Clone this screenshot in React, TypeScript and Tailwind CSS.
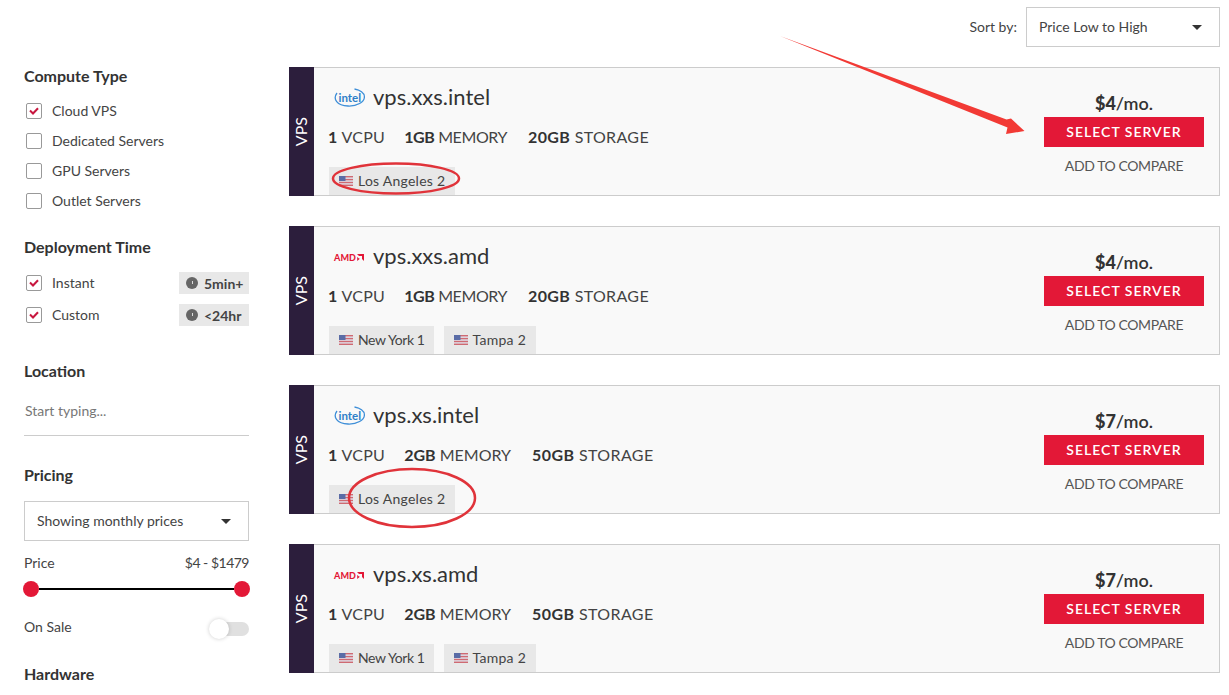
import type { ReactNode } from "react";

const SERVERS = [
  { name: "vps.xxs.intel", brand: "intel", price: "$4", cpu: "1", mem: "1GB", disk: "20GB", tags: ["Los Angeles 2"] },
  { name: "vps.xxs.amd", brand: "amd", price: "$4", cpu: "1", mem: "1GB", disk: "20GB", tags: ["New York 1", "Tampa 2"] },
  { name: "vps.xs.intel", brand: "intel", price: "$7", cpu: "1", mem: "2GB", disk: "50GB", tags: ["Los Angeles 2"] },
  { name: "vps.xs.amd", brand: "amd", price: "$7", cpu: "1", mem: "2GB", disk: "50GB", tags: ["New York 1", "Tampa 2"] },
];

// tag labels don't quite share the reference font's widths
const TAG_SPACING: Record<string, string> = {
  "Los Angeles 2": "tracking-[0.25px]",
  "New York 1": "tracking-[-0.4px] pr-[9px]",
  "Tampa 2": "tracking-[0.25px]",
};

function Caret() {
  return <span className="h-0 w-0 border-x-[5px] border-t-[5px] border-x-transparent border-t-[#333]" />;
}

function Flag() {
  return (
    <svg width="14" height="10" viewBox="0 0 14 10" className="shrink-0">
      <rect width="14" height="10" fill="#dfe0ea" />
      <rect y="0" width="14" height="1.4" fill="#cf6a72" />
      <rect y="2.9" width="14" height="1.4" fill="#cf6a72" />
      <rect y="5.8" width="14" height="1.4" fill="#cf6a72" />
      <rect y="8.6" width="14" height="1.4" fill="#cf6a72" />
      <rect width="6.5" height="5" fill="#5a6ca6" />
    </svg>
  );
}

function IntelLogo() {
  return (
    <svg width="31" height="20" viewBox="0 0 31 20">
      <path d="M3 5C-1.5 11 3 17.5 14 18C23 18.4 30.4 14 30.4 9C30.4 5 26 2 20.5 1" fill="none" stroke="#3f8fd8" strokeWidth="1.3" />
      <text x="4.5" y="13.5" fontSize="11.5" fontWeight="700" fill="#2f7fc8" fontFamily="Lato, sans-serif">intel</text>
    </svg>
  );
}

function AmdLogo() {
  return (
    <div className="flex w-[31px] items-center gap-px text-[9px] font-black leading-none tracking-[0.1px] text-[#e31837]">
      <span>AMD</span>
      <svg width="7" height="7" viewBox="0 0 7 7">
        <path d="M0 0H7V7L5 5V2H2ZM0 2.8L2 4.6H2.6V5L0.2 7V3Z" fill="#e31837" />
      </svg>
    </div>
  );
}

function Check({ label, checked }: { label: string; checked?: boolean }) {
  return (
    <div className="flex items-center gap-[10px]">
      <span className="flex h-4 w-4 items-center justify-center rounded-[2px] border border-[#999] bg-white">
        {checked && (
          <svg width="10" height="8" viewBox="0 0 10 8">
            <path d="M1 3.5L4 6.5L9 1.2" fill="none" stroke="#c8173f" strokeWidth="2" />
          </svg>
        )}
      </span>
      <span className="pb-px text-[14px] leading-[19px] text-[#444]">{label}</span>
    </div>
  );
}

function TimeBadge({ text }: { text: string }) {
  return (
    <span className="flex h-[22px] w-[70px] items-center gap-[6px] bg-[#e8e8e8] pl-[7px] text-[14px] font-bold text-[#444]">
      <span className="flex h-3 w-3 items-center justify-center rounded-full bg-[#666]">
        <span className="mb-[2px] h-[3px] w-px bg-[#ddd]" />
      </span>
      {text}
    </span>
  );
}

function Heading({ children }: { children: ReactNode }) {
  return <h3 className="text-[16px] font-bold leading-5 text-[#333]">{children}</h3>;
}

function Sidebar() {
  return (
    <aside className="flex w-[225px] shrink-0 flex-col pt-[66px]">
      <Heading>Compute Type</Heading>
      <div className="mt-[15px] flex flex-col gap-[10px] pl-[2px]">
        <Check label="Cloud VPS" checked />
        <Check label="Dedicated Servers" />
        <Check label="GPU Servers" />
        <Check label="Outlet Servers" />
      </div>

      <div className="mt-[26px]">
        <Heading>Deployment Time</Heading>
      </div>
      <div className="mt-[15px] flex flex-col gap-[10px] pl-[2px]">
        <div className="flex items-center justify-between">
          <Check label="Instant" checked />
          <TimeBadge text="5min+" />
        </div>
        <div className="flex items-center justify-between">
          <Check label="Custom" checked />
          <TimeBadge text="<24hr" />
        </div>
      </div>

      <div className="mt-[35px]">
        <Heading>Location</Heading>
      </div>
      <div className="mt-[10px] h-[45px] border-b border-[#ccc] pl-[1px] pt-[10px] text-[14px] leading-5 text-[#777]">Start typing...</div>

      <div className="mt-[29px]">
        <Heading>Pricing</Heading>
      </div>
      <div className="mt-[16px] flex h-10 items-center justify-between border border-[#ccc] pl-3 pr-[17px] text-[14px] text-[#444]">
        <span className="pb-[2px]">Showing monthly prices</span>
        <Caret />
      </div>
      <div className="mt-[12px] flex justify-between text-[14px] leading-5 text-[#444]">
        <span>Price</span>
        <span className="tracking-[-0.5px]">$4 - $1479</span>
      </div>
      <div className="mx-[-1px] mt-[8px] flex items-center">
        <span className="h-4 w-4 shrink-0 rounded-full bg-[#e31837]" />
        <span className="h-[2px] flex-1 bg-black" />
        <span className="h-4 w-4 shrink-0 rounded-full bg-[#e31837]" />
      </div>
      <div className="mt-[24px] flex items-center justify-between text-[14px] leading-5 text-[#444]">
        <span className="-mt-1">On Sale</span>
        <span className="relative h-[14px] w-[30px] rounded-full bg-[#e0e0e0]">
          <span className="absolute left-[-10px] top-[-3px] h-5 w-5 rounded-full bg-white shadow-[0_0_4px_rgba(0,0,0,0.2)]" />
        </span>
      </div>
      <div className="mt-[27px]">
        <Heading>Hardware</Heading>
      </div>
    </aside>
  );
}

function ServerCard({ s }: { s: (typeof SERVERS)[number] }) {
  return (
    <div className="flex h-[129px] border border-l-0 border-[#ccc] bg-[#f9f9f9]">
      <div className="-my-px flex w-[25px] shrink-0 items-center justify-center bg-[#2c1e3c] pr-px">
        <span className="rotate-180 text-[16px] text-white [writing-mode:vertical-rl]">VPS</span>
      </div>
      <div className="flex flex-1 justify-between pl-[14px]">
        <div className="flex flex-col">
          <div className="mt-[16px] flex h-7 items-center gap-[8px] pl-[6px]">
            {s.brand === "intel" ? <IntelLogo /> : <AmdLogo />}
            <span className="pb-[2px] text-[22px] leading-7 text-[#333]">{s.name}</span>
          </div>
          <div className="mt-[15px] flex text-[16px] leading-5 tracking-[0.3px] text-[#444]">
            <span className="mr-[19px]"><b className="text-[#333]">{s.cpu}</b> VCPU</span>
            <span className={s.mem === "1GB" ? "mr-[21px] tracking-[-0.4px]" : "mr-[21px] tracking-[0px]"}><b className="text-[#333]">{s.mem}</b> MEMORY</span>
            <span className={s.disk === "50GB" ? "tracking-[0.4px]" : "tracking-[0.35px]"}><b className="text-[#333]">{s.disk}</b> STORAGE</span>
          </div>
          <div className="mt-auto flex gap-[10px] pl-px">
            {s.tags.map((t) => (
              <span key={t} className={`flex h-7 items-center gap-[5px] bg-[#e8e8e8] px-[10px] pb-px text-[14px] text-[#444] ${TAG_SPACING[t]}`}>
                <Flag />
                {t}
              </span>
            ))}
          </div>
        </div>
        <div className="mr-[15px] flex w-[160px] flex-col items-center pt-[24px]">
          <div className="text-[18px] font-semibold leading-[22px] text-[#333]">
            <b>{s.price}</b>/mo.
          </div>
          <button className="mt-[3px] h-[30px] w-full bg-[#e31837] pb-[2px] text-[14px] font-semibold tracking-[1px] text-white">SELECT SERVER</button>
          <span className="mt-[9px] text-[14px] leading-5 tracking-[-0.4px] text-[#555]">ADD TO COMPARE</span>
        </div>
      </div>
    </div>
  );
}

export default function App() {
  return (
    <div className="relative h-[695px] w-[1229px] overflow-hidden bg-white font-['Lato',sans-serif]">
      <div className="flex pl-6">
        <Sidebar />
        <main className="ml-10 w-[931px]">
          <div className="flex items-center justify-end gap-[9px] pt-[7px]">
            <span className="pb-[2px] text-[14px] text-[#444]">Sort by:</span>
            <div className="flex h-[40px] w-[194px] items-center justify-between border border-[#ccc] pl-3 pr-[17px] text-[14px] text-[#444]">
              <span className="pb-[2px]">Price Low to High</span>
              <Caret />
            </div>
          </div>
          <div className="mt-[20px] flex flex-col gap-[30px]">
            {SERVERS.map((s) => (
              <ServerCard key={s.name} s={s} />
            ))}
          </div>
        </main>
      </div>

      {/* Hand-drawn annotations over the page */}
      <svg className="pointer-events-none absolute inset-0" width="1229" height="695" viewBox="0 0 1229 695">
        <polygon points="780,36 1006.5,119.5 1011,118.5 1024.5,131 1006,134 1007.5,127.5" fill="#f23a35" />
        <ellipse cx="396" cy="178.5" rx="63" ry="15" fill="none" stroke="#e0333a" strokeWidth="2.5" />
        <ellipse cx="412" cy="498" rx="63" ry="29" fill="none" stroke="#e0333a" strokeWidth="2.5" />
      </svg>
    </div>
  );
}
